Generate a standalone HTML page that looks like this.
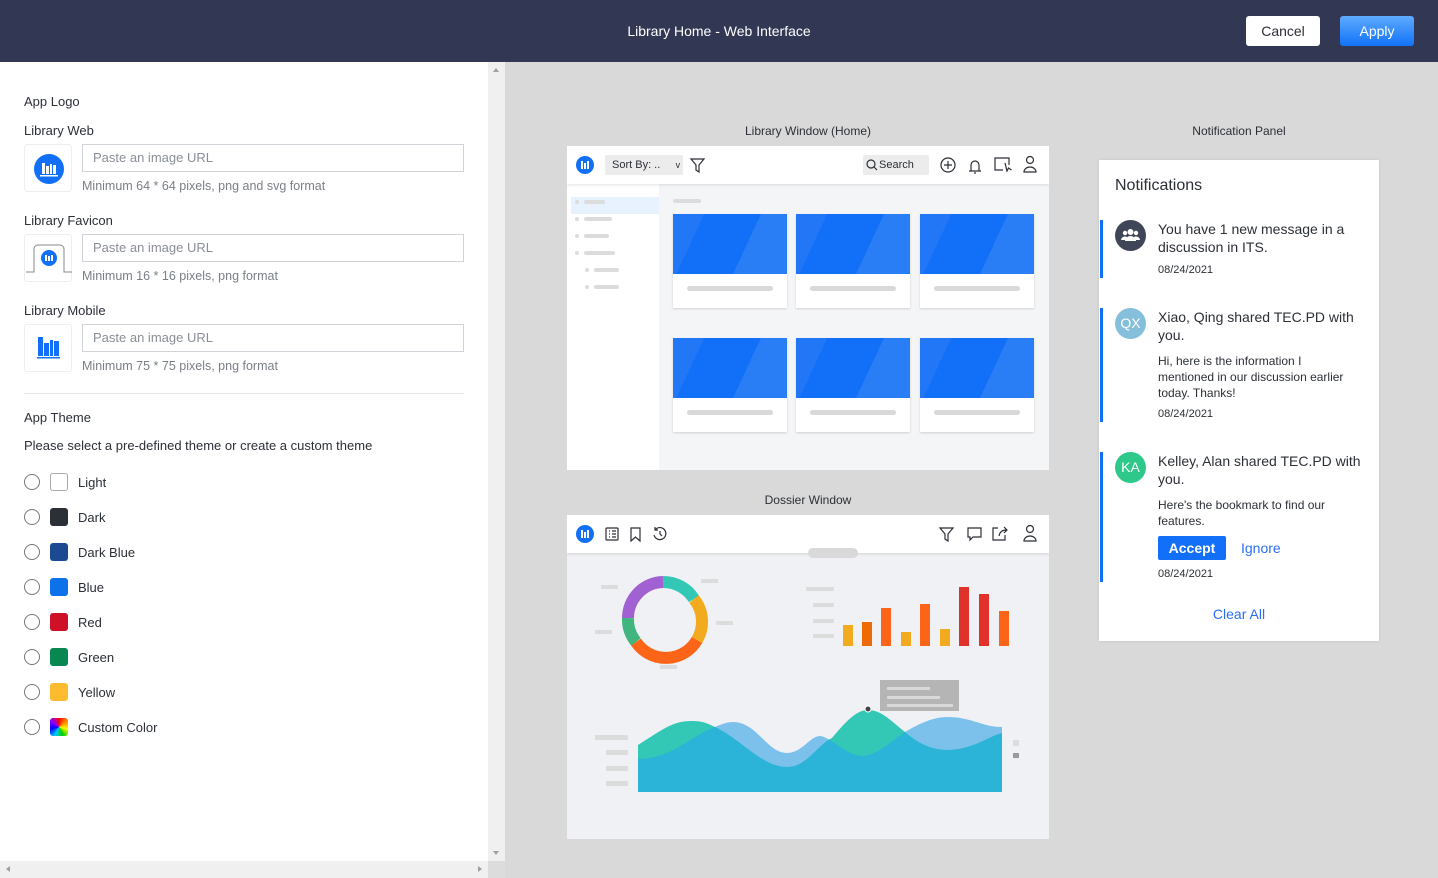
<!DOCTYPE html>
<html><head><meta charset="utf-8">
<style>
*{box-sizing:border-box;margin:0;padding:0}
body{width:1438px;height:878px;overflow:hidden;font-family:"Liberation Sans","DejaVu Sans",sans-serif;background:#d9d9d9;position:relative;color:#2b2f36}
.hdr{position:absolute;left:0;top:0;width:1438px;height:62px;background:#323854}
.hdr .t{position:absolute;left:0;width:1438px;top:23px;text-align:center;color:#fff;font-size:14px}
.btn{position:absolute;top:16px;height:30px;width:74px;border-radius:3px;font-size:14px;text-align:center;line-height:30px}
.left{position:absolute;left:0;top:62px;width:488px;height:799px;background:#fff}
.vs{position:absolute;left:488px;top:62px;width:17px;height:799px;background:#f0f0f0}
.hs{position:absolute;left:0;top:861px;width:488px;height:17px;background:#f0f0f0}
.lbl{position:absolute;left:24px;font-size:13px;color:#2b2f36}
.logo{position:absolute;left:24px;width:48px;height:48px;border:1px solid #eceef1;border-radius:3px;background:#fff}
.inp{position:absolute;left:82px;width:382px;height:28px;border:1px solid #d0d3d8;font-size:13px;color:#8a8e96;padding-left:10px;line-height:26px}
.hint{position:absolute;left:82px;font-size:12.5px;color:#7a7e86}
.radio{position:absolute;left:24px;width:16px;height:16px;border:1px solid #777;border-radius:50%}
.sw{position:absolute;left:50px;width:18px;height:18px;border-radius:3px}
.rl{position:absolute;left:78px;font-size:13px}
.cap{position:absolute;font-size:12px;color:#2b2f36;text-align:center}
.win{position:absolute;left:567px;width:482px;height:324px;background:#f4f5f7;overflow:hidden}
.tb{position:absolute;left:0;top:0;width:482px;height:38px;background:#fff;box-shadow:0 1px 3px rgba(0,0,0,.12)}
.card{position:absolute;width:114px;height:94px;background:#fff;box-shadow:0 1px 2px rgba(0,0,0,.15)}
.card .im{height:60px;background:linear-gradient(115deg,#2177f5 0 22%,#1170f7 22% 62%,#2a7ef5 62%)}
.card .ln{position:absolute;left:14px;right:14px;top:72px;height:5px;border-radius:3px;background:#d9d9d9}
.sb{position:absolute;height:4px;border-radius:2px;background:#dcdcdc}
.dot{position:absolute;width:4px;height:4px;border-radius:50%;background:#dcdcdc}
.np{position:absolute;left:1099px;top:160px;width:280px;height:481px;background:#fff;box-shadow:0 0 3px rgba(0,0,0,.1)}
.bar{position:absolute;left:1px;width:3px;background:#1170f7}
.av{position:absolute;left:16px;width:31px;height:31px;border-radius:50%;color:#fff;font-size:14px;text-align:center;line-height:31px}
.nt{position:absolute;left:59px;width:210px;font-size:14px;line-height:18px;color:#2b2f36}
.nb{position:absolute;left:59px;width:196px;font-size:12px;line-height:16px;color:#2b2f36}
.nd{position:absolute;left:59px;font-size:11px;color:#2b2f36}
</style></head><body>
<div class="hdr"><div class="t">Library Home - Web Interface</div>
<div class="btn" style="left:1246px;background:#fff;color:#2b2f36">Cancel</div>
<div class="btn" style="left:1340px;background:linear-gradient(#5eaaff,#1173f8);color:#fff">Apply</div></div>

<div class="left">
<div class="lbl" style="top:32px">App Logo</div>
<div class="lbl" style="top:61px">Library Web</div>
<div class="logo" style="top:82px"><div style="position:absolute;left:9px;top:9px;width:30px;height:30px;border-radius:50%;background:#1170f7"><svg width="30" height="30"><g fill="#fff"><rect x="8" y="9" width="3" height="11"/><rect x="12" y="12" width="3" height="8"/><rect x="16" y="10" width="2" height="10"/><rect x="19" y="11" width="3" height="9"/><rect x="6" y="21" width="18" height="1.5"/></g></svg></div></div>
<div class="inp" style="top:82px">Paste an image URL</div>
<div class="hint" style="top:117px">Minimum 64 * 64 pixels, png and svg format</div>
<div class="lbl" style="top:151px">Library Favicon</div>
<div class="logo" style="top:172px"><svg width="48" height="48"><path d="M1 37h8V14a4 4 0 0 1 4-4h22a4 4 0 0 1 4 4v23h8" fill="none" stroke="#888" stroke-width="1"/><circle cx="24" cy="23" r="8" fill="#1170f7"/><g fill="#fff"><rect x="20" y="20" width="2" height="6"/><rect x="23" y="21" width="2" height="5"/><rect x="26" y="20" width="2" height="6"/></g></svg></div>
<div class="inp" style="top:172px">Paste an image URL</div>
<div class="hint" style="top:207px">Minimum 16 * 16 pixels, png format</div>
<div class="lbl" style="top:241px">Library Mobile</div>
<div class="logo" style="top:262px"><svg width="48" height="48"><g fill="#1170f7"><rect x="13" y="12" width="5" height="19"/><rect x="19" y="18" width="5" height="13"/><rect x="25" y="15" width="3" height="16"/><rect x="29" y="16" width="5" height="15"/><rect x="12" y="32" width="23" height="1.5"/></g></svg></div>
<div class="inp" style="top:262px">Paste an image URL</div>
<div class="hint" style="top:297px">Minimum 75 * 75 pixels, png format</div>
<div style="position:absolute;left:24px;top:331px;width:440px;height:1px;background:#e3e5e8"></div>
<div class="lbl" style="top:348px">App Theme</div>
<div class="lbl" style="top:376px">Please select a pre-defined theme or create a custom theme</div>
<div class="radio" style="top:412px"></div><div class="sw" style="top:411px;border:1px solid #aaa"></div><div class="rl" style="top:413px">Light</div>
<div class="radio" style="top:447px"></div><div class="sw" style="top:446px;background:#2b2f36"></div><div class="rl" style="top:448px">Dark</div>
<div class="radio" style="top:482px"></div><div class="sw" style="top:481px;background:#1b4a93"></div><div class="rl" style="top:483px">Dark Blue</div>
<div class="radio" style="top:517px"></div><div class="sw" style="top:516px;background:#0d72ea"></div><div class="rl" style="top:518px">Blue</div>
<div class="radio" style="top:552px"></div><div class="sw" style="top:551px;background:#ce1126"></div><div class="rl" style="top:553px">Red</div>
<div class="radio" style="top:587px"></div><div class="sw" style="top:586px;background:#088751"></div><div class="rl" style="top:588px">Green</div>
<div class="radio" style="top:622px"></div><div class="sw" style="top:621px;background:#fdbc30"></div><div class="rl" style="top:623px">Yellow</div>
<div class="radio" style="top:657px"></div><div class="sw" style="top:656px;background:conic-gradient(#f00,#f80,#ff0,#0c0,#0cf,#00f,#80f,#f00)"></div><div class="rl" style="top:658px">Custom Color</div>
</div>
<div class="vs"><div style="position:absolute;left:5px;top:6px;border:3.5px solid transparent;border-bottom:4px solid #a0a0a0;border-top:0"></div><div style="position:absolute;left:5px;top:789px;border:3.5px solid transparent;border-top:4px solid #a0a0a0;border-bottom:0"></div></div>
<div class="hs"><div style="position:absolute;left:6px;top:5px;border:3.5px solid transparent;border-right:4px solid #a0a0a0;border-left:0"></div><div style="position:absolute;left:478px;top:5px;border:3.5px solid transparent;border-left:4px solid #a0a0a0;border-right:0"></div></div>
<div style="position:absolute;left:488px;top:861px;width:17px;height:17px;background:#dcdcdc"></div>

<div class="cap" style="left:567px;width:482px;top:124px">Library Window (Home)</div>
<div class="cap" style="left:1099px;width:280px;top:124px">Notification Panel</div>
<div class="cap" style="left:567px;width:482px;top:493px">Dossier Window</div>

<div class="win" style="top:146px">
<div style="position:absolute;left:0;top:38px;width:92px;height:286px;background:#fff"></div>
<div class="tb">
<svg width="482" height="38" fill="none" stroke="#2b2f36" stroke-width="1.2">
<circle cx="18" cy="19" r="9" fill="#1170f7" stroke="none"/><g fill="#fff" stroke="none"><rect x="14" y="15" width="2" height="8"/><rect x="17" y="17" width="2" height="6"/><rect x="20" y="15" width="2" height="8"/></g>
<rect x="38" y="9" width="78" height="20" rx="2" fill="#ececec" stroke="none"/>
<path d="M124 13h13l-5 6v7l-3-2v-5z"/>
<rect x="296" y="9" width="66" height="20" rx="2" fill="#ececec" stroke="none"/>
<circle cx="304" cy="18" r="4"/><path d="M307 21l3 3"/>
<circle cx="381" cy="19" r="7"/><path d="M381 15v8M377 19h8"/>
<path d="M402 25h12M404 25v-6a4 4 0 0 1 8 0v6M407 27h2"/>
<path d="M436 24h-8v-12h14v7M438 17l2 8 1.5-3 3 2"/>
<circle cx="463" cy="14" r="3.5"/><path d="M457 26a6 5 0 0 1 12 0z"/>
</svg>
<div style="position:absolute;left:45px;top:13px;font-size:11px;color:#2b2f36">Sort By: ..&nbsp;&nbsp;&nbsp;&nbsp; <span style="font-size:9px">v</span></div>
<div style="position:absolute;left:312px;top:13px;font-size:11px;color:#2b2f36">Search</div>
</div>
<div style="position:absolute;left:4px;top:51px;width:88px;height:17px;background:#e8f1fe"></div>
<div class="dot" style="left:8px;top:54px"></div><div class="sb" style="left:17px;top:54px;width:21px"></div>
<div class="dot" style="left:8px;top:71px"></div><div class="sb" style="left:17px;top:71px;width:28px"></div>
<div class="dot" style="left:8px;top:88px"></div><div class="sb" style="left:17px;top:88px;width:25px"></div>
<div class="dot" style="left:8px;top:105px"></div><div class="sb" style="left:17px;top:105px;width:31px"></div>
<div class="dot" style="left:18px;top:122px"></div><div class="sb" style="left:27px;top:122px;width:25px"></div>
<div class="dot" style="left:18px;top:139px"></div><div class="sb" style="left:27px;top:139px;width:25px"></div>
<div class="sb" style="left:106px;top:53px;width:28px"></div>
<div class="card" style="left:106px;top:68px"><div class="im"></div><div class="ln"></div></div>
<div class="card" style="left:229px;top:68px"><div class="im"></div><div class="ln"></div></div>
<div class="card" style="left:353px;top:68px"><div class="im"></div><div class="ln"></div></div>
<div class="card" style="left:106px;top:192px"><div class="im"></div><div class="ln"></div></div>
<div class="card" style="left:229px;top:192px"><div class="im"></div><div class="ln"></div></div>
<div class="card" style="left:353px;top:192px"><div class="im"></div><div class="ln"></div></div>
</div>

<div class="win" style="top:515px;background:#f0f1f4">
<div class="tb">
<svg width="482" height="38" fill="none" stroke="#2b2f36" stroke-width="1.2">
<circle cx="18" cy="19" r="9" fill="#1170f7" stroke="none"/><g fill="#fff" stroke="none"><rect x="14" y="15" width="2" height="8"/><rect x="17" y="17" width="2" height="6"/><rect x="20" y="15" width="2" height="8"/></g>
<rect x="39" y="13" width="12" height="12" rx="1"/><path d="M42 16h1M45 16h4M42 19h1M45 19h4M42 22h1M45 22h4"/>
<path d="M64 13h9v13l-4.5-4-4.5 4z"/>
<path d="M88 15a6 6 0 1 1-1 5M88 12v3h3M93 16v3l2 2"/>
<path d="M373 13h13l-5 6v7l-3-2v-5z"/>
<path d="M401 13h13v9h-8l-3 3v-3h-2z"/>
<path d="M438 20v5h-12v-12h5M432 21c1-5 4-6 8-6M437 12l3 3-3 3"/>
<circle cx="463" cy="14" r="3.5"/><path d="M457 26a6 5 0 0 1 12 0z"/>
</svg></div>
<div style="position:absolute;left:241px;top:33px;width:50px;height:10px;border-radius:5px;background:#d9d9d9"></div>
<svg width="482" height="324" style="position:absolute;left:0;top:0">
<defs><clipPath id="tc"><path d="M71 230C95 215 105 206 125 206C135 206 140 208 148 212C175 225 195 252 220 252C240 252 250 230 265 223C280 205 290 195 301 195C315 195 325 207 338 217C350 228 365 235 380 235C405 235 420 222 435 218V277H71Z"/></clipPath></defs>
<g fill="#dcdcdc"><rect x="34" y="70" width="17" height="4"/><rect x="28" y="115" width="17" height="4"/><rect x="134" y="64" width="17" height="4"/><rect x="149" y="106" width="17" height="4"/><rect x="93" y="150" width="17" height="4"/>
<rect x="239" y="72" width="28" height="4"/><rect x="246" y="88" width="21" height="4"/><rect x="246" y="104" width="21" height="4"/><rect x="246" y="119" width="21" height="4"/>
<rect x="28" y="220" width="33" height="5"/><rect x="39" y="235" width="22" height="5"/><rect x="39" y="251" width="22" height="5"/><rect x="39" y="266" width="22" height="5"/>
<rect x="446" y="225" width="6" height="6"/></g>
<rect x="446" y="238" width="6" height="5" fill="#999"/>
<path d="M96 67a36 36 0 0 1 31 17" stroke="#33c7b6" stroke-width="12" fill="none"/>
<path d="M127 84a36 36 0 0 1 3 41" stroke="#f2ab1e" stroke-width="12" fill="none"/>
<path d="M130 125a36 36 0 0 1-61 2" stroke="#fc6418" stroke-width="12" fill="none"/>
<path d="M69 127a36 36 0 0 1-8-24" stroke="#41b57d" stroke-width="12" fill="none"/>
<path d="M61 103a36 36 0 0 1 35-36" stroke="#a261d2" stroke-width="12" fill="none"/>
<g><rect x="276" y="110" width="10" height="21" fill="#f2ab1e"/><rect x="295" y="107" width="10" height="24" fill="#ee6a05"/><rect x="314" y="93" width="10" height="38" fill="#fc6418"/><rect x="334" y="117" width="10" height="14" fill="#f2ab1e"/><rect x="353" y="89" width="10" height="42" fill="#fc6418"/><rect x="373" y="114" width="10" height="17" fill="#f2ab1e"/><rect x="392" y="72" width="10" height="59" fill="#e1312b"/><rect x="412" y="79" width="10" height="52" fill="#e1312b"/><rect x="432" y="96" width="10" height="35" fill="#fc6418"/></g>
<rect x="313" y="165" width="79" height="31" fill="#b5b5b5"/><g fill="#d8d8d8"><rect x="320" y="172" width="43" height="3"/><rect x="320" y="181" width="53" height="3"/><rect x="320" y="189" width="66" height="3"/></g>
<path id="lb" d="M71 244C105 244 125 220 148 212C155 209 160 207 166 207C190 207 200 238 220 238C235 238 243 221 253 221C262 221 280 241 295 241C310 241 325 225 338 217C350 210 365 202 380 202C405 202 415 212 435 212V277H71Z" fill="#7cc1ec"/>
<path d="M71 230C95 215 105 206 125 206C135 206 140 208 148 212C175 225 195 252 220 252C240 252 250 230 265 223C280 205 290 195 301 195C315 195 325 207 338 217C350 228 365 235 380 235C405 235 420 222 435 218V277H71Z" fill="#33c7b6"/>
<path clip-path="url(#tc)" d="M71 244C105 244 125 220 148 212C155 209 160 207 166 207C190 207 200 238 220 238C235 238 243 221 253 221C262 221 280 241 295 241C310 241 325 225 338 217C350 210 365 202 380 202C405 202 415 212 435 212V277H71Z" fill="#2cb4d8"/>
<circle cx="301" cy="194" r="3" fill="#444" stroke="#fff" stroke-width="1"/>
</svg>
</div>

<div class="np">
<div style="position:absolute;left:16px;top:17px;font-size:16px;color:#2b2f36">Notifications</div>
<div class="bar" style="top:60px;height:58px"></div>
<div class="av" style="top:60px;background:#3f4658"><svg width="31" height="31"><g fill="#fff"><circle cx="15.5" cy="12" r="3"/><path d="M10 21a5.5 5 0 0 1 11 0z"/><circle cx="10" cy="13" r="2.2"/><circle cx="21" cy="13" r="2.2"/><path d="M6 20a4 4 0 0 1 6-3v3zM25 20a4 4 0 0 0-6-3v3z"/></g></svg></div>
<div class="nt" style="top:60px">You have 1 new message in a discussion in ITS.</div>
<div class="nd" style="top:104px">08/24/2021</div>
<div class="bar" style="top:148px;height:114px"></div>
<div class="av" style="top:148px;background:#86bfdb">QX</div>
<div class="nt" style="top:148px">Xiao, Qing shared TEC.PD with you.</div>
<div class="nb" style="top:193px">Hi, here is the information I mentioned in our discussion earlier today. Thanks!</div>
<div class="nd" style="top:248px">08/24/2021</div>
<div class="bar" style="top:292px;height:130px"></div>
<div class="av" style="top:292px;background:#2ec98a">KA</div>
<div class="nt" style="top:292px">Kelley, Alan shared TEC.PD with you.</div>
<div class="nb" style="top:337px">Here's the bookmark to find our features.</div>
<div style="position:absolute;left:59px;top:376px;width:68px;height:24px;border-radius:2px;background:#1170f7;color:#fff;font-size:14px;font-weight:bold;text-align:center;line-height:24px">Accept</div>
<div style="position:absolute;left:142px;top:380px;font-size:14px;color:#2a6ef5">Ignore</div>
<div class="nd" style="top:408px">08/24/2021</div>
<div style="position:absolute;left:0;width:280px;top:446px;text-align:center;font-size:14px;color:#2a6ef5">Clear All</div>
</div>
</body></html>
